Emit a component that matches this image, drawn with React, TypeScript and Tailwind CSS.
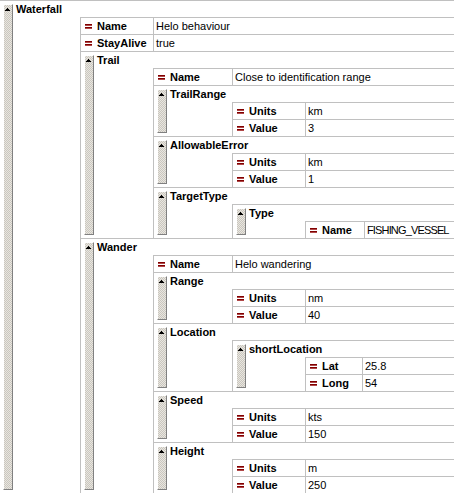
import React from 'react';

type XNode =
  | { kind: 'attr'; name: string; value: string; tight?: boolean }
  | { kind: 'elem'; name: string; w: number; children: XNode[] };

// full class names per column width (name column incl. its right rule)
const nameCol: Record<number, string> = {
  73: 'w-[73px]',
  79: 'w-[79px]',
  59: 'w-[59px]',
  57: 'w-[57px]',
};

// children of an element start at the value column of the table it sits in
const childIndent: Record<number, string> = {
  81: 'ml-[64px]',
  73: 'ml-[56px]',
  79: 'ml-[62px]',
};

const attr = (name: string, value: string, tight?: boolean): XNode => ({ kind: 'attr', name, value, tight });
const elem = (name: string, w: number, children: XNode[]): XNode => ({ kind: 'elem', name, w, children });

const tree: XNode = elem('Waterfall', 73, [
  attr('Name', 'Helo behaviour'),
  attr('StayAlive', 'true'),
  elem('Trail', 79, [
    attr('Name', 'Close to identification range'),
    elem('TrailRange', 73, [attr('Units', 'km'), attr('Value', '3')]),
    elem('AllowableError', 73, [attr('Units', 'km'), attr('Value', '1')]),
    elem('TargetType', 73, [elem('Type', 59, [attr('Name', 'FISHING_VESSEL', true)])]),
  ]),
  elem('Wander', 79, [
    attr('Name', 'Helo wandering'),
    elem('Range', 73, [attr('Units', 'nm'), attr('Value', '40')]),
    elem('Location', 73, [
      elem('shortLocation', 57, [attr('Lat', '25.8'), attr('Long', '54')]),
    ]),
    elem('Speed', 73, [attr('Units', 'kts'), attr('Value', '150')]),
    elem('Height', 73, [attr('Units', 'm'), attr('Value', '250')]),
  ]),
]);

const AttrIcon = () => (
  <svg width="7" height="5" viewBox="0 0 7 5" shapeRendering="crispEdges" className="shrink-0">
    <rect x="0" y="0" width="7" height="1" fill="#800000" />
    <rect x="0" y="1" width="7" height="1" fill="#b04848" />
    <rect x="0" y="3" width="7" height="1" fill="#800000" />
    <rect x="0" y="4" width="7" height="1" fill="#b04848" />
  </svg>
);

const CollapseBar = () => (
  <div className="flex w-[16px] shrink-0 px-[3px] pt-[3px] pb-[3px]">
    <div className="flex w-[10px] flex-col border border-t-white border-l-white border-r-[#808080] border-b-[#808080] bg-[#d4d0c8] bg-[image:repeating-conic-gradient(#cac6be_0_25%,#e8e6e0_0_50%)] bg-[length:2px_2px]">
      <svg width="5" height="3" viewBox="0 0 5 3" shapeRendering="crispEdges" className="ml-[1px] mt-[3px]">
        <rect x="2" y="0" width="1" height="1" fill="#000" />
        <rect x="1" y="1" width="3" height="1" fill="#000" />
        <rect x="0" y="2" width="5" height="1" fill="#000" />
      </svg>
    </div>
  </div>
);

const Row = ({ node, w }: { node: XNode; w: number }) => {
  if (node.kind === 'attr') {
    return (
      <div className="flex h-[17px] border-t border-[#c0c0c0]">
        <div className={`${nameCol[w]} flex shrink-0 items-center border-r border-[#c0c0c0] pl-[4px]`}>
          <AttrIcon />
          <span className="ml-[5px] font-bold">{node.name}</span>
        </div>
        <div className={`flex flex-1 items-center whitespace-nowrap pl-[2px] ${node.tight ? 'tracking-[-0.85px]' : ''}`}>
          {node.value}
        </div>
      </div>
    );
  }
  return <Element node={node} w={w} />;
};

const Element = ({ node, w }: { node: Extract<XNode, { kind: 'elem' }>; w: number }) => (
  <div className="flex border-t border-[#c0c0c0]">
    <CollapseBar />
    <div className="flex min-w-0 flex-1 flex-col">
      <div className="flex h-[16px] items-center whitespace-nowrap font-bold">{node.name}</div>
      <div className={`${childIndent[w]} flex flex-col border-l border-[#c0c0c0]`}>
        {node.children.map((c, i) => (
          <Row key={i} node={c} w={node.w} />
        ))}
      </div>
    </div>
  </div>
);

export default function App() {
  return (
    <div className="h-[493px] w-[454px] overflow-hidden bg-white font-['Liberation_Sans',Arial,sans-serif] text-[11px] leading-[16px] text-black">
      <Element node={tree as Extract<XNode, { kind: 'elem' }>} w={81} />
    </div>
  );
}
